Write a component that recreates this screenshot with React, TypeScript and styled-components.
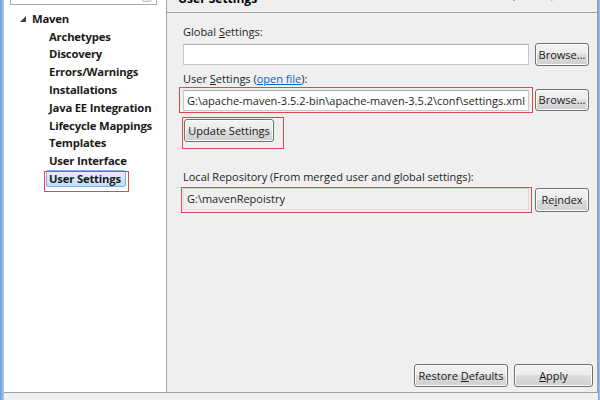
import React from 'react'
import styled, { createGlobalStyle } from 'styled-components'

const Global = createGlobalStyle`
  html, body {
    margin: 0;
    padding: 0;
    background: #f0f0f0;
  }
`

const treeItems = [
  'Archetypes',
  'Discovery',
  'Errors/Warnings',
  'Installations',
  'Java EE Integration',
  'Lifecycle Mappings',
  'Templates',
  'User Interface',
  'User Settings',
]

const Mnemonic = ({ text, at }: { text: string; at: number }) => (
  <>
    {text.slice(0, at)}
    <u>{text[at]}</u>
    {text.slice(at + 1)}
  </>
)

const ExpandedTriangle = () => (
  <svg width='6' height='6' viewBox='0 0 6 6'>
    <polygon points='6,0 6,6 0,6' fill='#404040' />
  </svg>
)

const ClearIcon = () => (
  <svg width='10' height='10' viewBox='0 0 10 10'>
    <rect x='0.5' y='0.5' width='9' height='9' rx='2' fill='#e6e6e6' stroke='#c4c4c4' />
    <path d='M3 3l4 4M7 3l-4 4' stroke='#9a9a9a' strokeWidth='1.2' />
  </svg>
)

const NavArrow = ({ color, edge }: { color: string; edge: string }) => (
  <svg width='14' height='14' viewBox='0 0 14 14'>
    <path d='M2 7l5-5v3h5v4H7v3z' fill={color} stroke={edge} strokeWidth='0.8' />
  </svg>
)

export default function App() {
  return (
    <>
      <Global />
      <S.Frame>
        <S.Edge />
        <S.Body>
          <S.Main>
            <S.Sidebar>
              <S.Search>
                <S.SearchText>maven</S.SearchText>
                <ClearIcon />
              </S.Search>
              <S.Tree>
                <S.RootRow>
                  <S.Twisty><ExpandedTriangle /></S.Twisty>
                  Maven
                </S.RootRow>
                {treeItems.map(item => (
                  <S.ChildRow key={item}>
                    <S.ChildLabel $selected={item === 'User Settings'}>
                      {item}
                      {item === 'User Settings' && <S.TreeMark />}
                    </S.ChildLabel>
                  </S.ChildRow>
                ))}
              </S.Tree>
            </S.Sidebar>

            <S.Page>
              <S.Header>
                <S.HeaderTitle>User Settings</S.HeaderTitle>
                <S.HeaderTools>
                  <NavArrow color='#f0a020' edge='#c07810' />
                  <NavArrow color='#dcdcdc' edge='#b0b0b0' />
                </S.HeaderTools>
              </S.Header>

              <S.Content>
                <S.Label $top={11}><Mnemonic text='Global Settings:' at={7} /></S.Label>
                <S.FieldRow $top={3}>
                  <S.Input />
                  <S.Button $width={54}>Browse...</S.Button>
                </S.FieldRow>

                <S.Label $top={5}>
                  <Mnemonic text='User Settings' at={5} /> (<S.Link>open file</S.Link>):
                </S.Label>
                <S.FieldRow $top={0}>
                  <S.Mark $pad='2px 3px 1px 3px' $margin='0 -4px 0 -4px' $grow>
                    <S.Input $height={21}>G:\apache-maven-3.5.2-bin\apache-maven-3.5.2\conf\settings.xml</S.Input>
                  </S.Mark>
                  <S.Button $width={54} $height={22}>Browse...</S.Button>
                </S.FieldRow>

                <S.Mark $pad='1px 9px 6px 1px' $margin='4px 0 0 -1px'>
                  <S.Button $width={90}>Update Settings</S.Button>
                </S.Mark>

                <S.Label $top={20}>Local Repository (From merged user and global settings):</S.Label>
                <S.FieldRow $top={2}>
                  <S.Mark $pad='0 2px 2px 1px' $margin='0 -3px 0 -2px' $grow>
                    <S.Input $height={22} $readOnly>G:\mavenRepoistry</S.Input>
                  </S.Mark>
                  <S.Button $width={54} $height={24}><Mnemonic text='Reindex' at={2} /></S.Button>
                </S.FieldRow>
              </S.Content>

              <S.Footer>
                <S.Button $width={94}><Mnemonic text='Restore Defaults' at={8} /></S.Button>
                <S.Button $width={79}><Mnemonic text='Apply' at={0} /></S.Button>
              </S.Footer>
            </S.Page>
          </S.Main>
          <S.StatusStrip />
        </S.Body>
        <S.Edge $narrow />
      </S.Frame>
    </>
  )
}

const S = {
  Frame: styled.div`
    display: flex;
    width: 600px;
    height: 400px;
    overflow: hidden;
    background: #f0f0f0;
    font-family: "Open Sans", "Noto Sans", sans-serif;
    font-size: 11px;
    color: #000;
  `,
  Edge: styled.div<{ $narrow?: boolean }>`
    width: ${p => (p.$narrow ? 2 : 4)}px;
    flex: none;
    background: linear-gradient(to right, #6f9cd6, #a9c9ef);
  `,
  Body: styled.div`
    flex: 1;
    display: flex;
    flex-direction: column;
    min-width: 0;
  `,
  Main: styled.div`
    height: 392px;
    display: flex;
    border-bottom: 1px solid #a0a0a0;
  `,
  StatusStrip: styled.div`
    flex: 1;
    background: #f0f0f0;
  `,
  Sidebar: styled.aside`
    width: 162px;
    flex: none;
    background: #fff;
    border-right: 1px solid #a0a0a0;
    overflow: hidden;
  `,
  Search: styled.div`
    margin: -15px 0 0 6px;
    width: 147px;
    height: 20px;
    box-sizing: border-box;
    border: 1px solid #abadb3;
    display: flex;
    align-items: flex-end;
    justify-content: space-between;
    padding: 0 4px 2px 3px;
  `,
  SearchText: styled.span`
    line-height: 16px;
  `,
  Tree: styled.div`
    padding-top: 5px;
    font-weight: 700;
    font-size: 11.3px;
    letter-spacing: -0.2px;
    color: #1a1a1a;
    white-space: nowrap;
  `,
  RootRow: styled.div`
    height: 17.8px;
    display: flex;
    align-items: center;
    padding-left: 16px;
  `,
  Twisty: styled.span`
    width: 12px;
    display: flex;
    align-items: center;
  `,
  ChildRow: styled.div`
    height: 17.8px;
    display: flex;
    align-items: center;
    padding-left: 42px;
  `,
  ChildLabel: styled.span<{ $selected?: boolean }>`
    position: relative;
    height: 17px;
    margin-top: -1px;
    box-sizing: border-box;
    padding: 0 4px 0 2px;
    border-radius: 2px;
    border: 1px solid ${p => (p.$selected ? '#84acdd' : 'transparent')};
    background: ${p => (p.$selected ? 'linear-gradient(#e4effc, #c4dcfb)' : 'transparent')};
    line-height: 15px;
  `,
  TreeMark: styled.span`
    position: absolute;
    left: -3px;
    top: 0;
    width: 85px;
    height: 21px;
    box-sizing: border-box;
    border: 1px solid #e0474c;
  `,
  Page: styled.section`
    flex: 1;
    min-width: 0;
    display: flex;
    flex-direction: column;
    background: #efefef;
    border-right: 1px solid #a0a0a0;
  `,
  Header: styled.header`
    height: 12px;
    flex: none;
    display: flex;
    padding-left: 11px;
    border-bottom: 1px solid #a0a0a0;
    overflow: hidden;
  `,
  HeaderTitle: styled.div`
    margin-top: -9px;
    font-weight: 700;
    font-size: 12px;
    line-height: 16px;
  `,
  HeaderTools: styled.div`
    margin: -11px 0 0 auto;
    padding-right: 38px;
    display: flex;
    gap: 24px;
  `,
  Content: styled.div`
    display: flex;
    flex-direction: column;
    align-items: flex-start;
    min-width: 0;
    padding: 0 8px 0 16px;
  `,
  Label: styled.div<{ $top: number }>`
    margin-top: ${p => p.$top}px;
    line-height: 16px;
    color: #1e1e1e;
  `,
  Link: styled.span`
    color: #0066cc;
    text-decoration: underline;
  `,
  FieldRow: styled.div<{ $top: number }>`
    margin-top: ${p => p.$top}px;
    align-self: stretch;
    display: flex;
    align-items: center;
    gap: 6px;
    min-width: 0;
  `,
  Mark: styled.div<{ $pad: string; $margin: string; $grow?: boolean }>`
    flex: ${p => (p.$grow ? 1 : 'none')};
    min-width: 0;
    display: flex;
    padding: ${p => p.$pad};
    margin: ${p => p.$margin};
    border: 1px solid #e0474c;
  `,
  Input: styled.div<{ $height?: number; $readOnly?: boolean }>`
    flex: 1;
    min-width: 0;
    height: ${p => p.$height ?? 21}px;
    box-sizing: border-box;
    padding: 0 3px;
    line-height: ${p => (p.$height ?? 21) - 2}px;
    white-space: nowrap;
    overflow: hidden;
    background: ${p => (p.$readOnly ? '#efefef' : '#fff')};
    border: 1px solid ${p => (p.$readOnly ? '#d9d9d9' : '#c5c9cf')};
    border-top-color: ${p => (p.$readOnly ? '#d0d0d0' : '#abadb3')};
    color: #1e1e1e;
  `,
  Button: styled.div<{ $width: number; $height?: number }>`
    flex: none;
    width: ${p => p.$width}px;
    height: ${p => p.$height ?? 23}px;
    box-sizing: border-box;
    line-height: ${p => (p.$height ?? 23) - 2}px;
    text-align: center;
    white-space: nowrap;
    border: 1px solid #707070;
    border-radius: 3px;
    background: linear-gradient(#f2f2f2 0%, #ebebeb 49%, #dddddd 50%, #cfcfcf 100%);
    box-shadow: inset 0 0 0 1px #fcfcfc;
    color: #1a1a1a;
  `,
  Footer: styled.div`
    margin-top: auto;
    display: flex;
    justify-content: flex-end;
    gap: 6px;
    padding: 0 4px 5px 0;
  `,
}
